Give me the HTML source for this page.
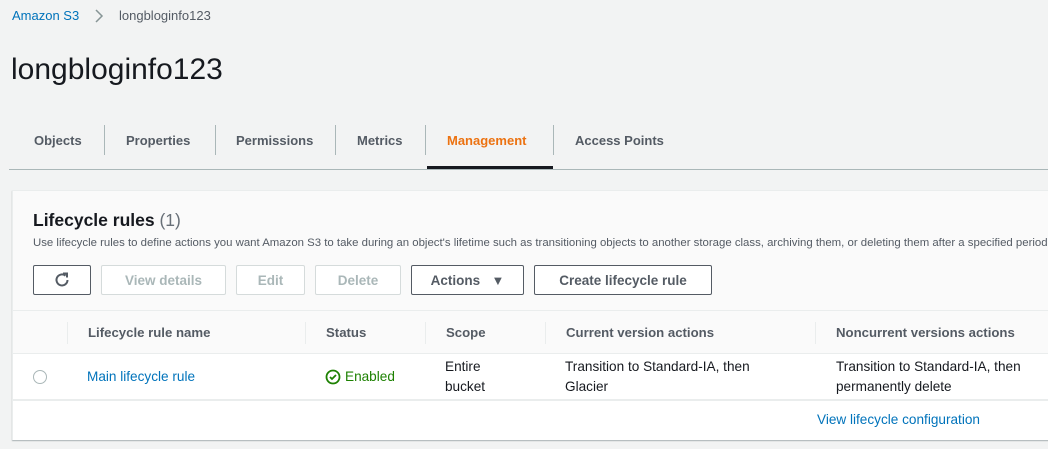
<!DOCTYPE html>
<html><head><style>
*{margin:0;padding:0;box-sizing:border-box}
body{width:1048px;height:449px;background:#f2f3f3;font-family:"Liberation Sans",sans-serif;color:#16191f;position:relative;overflow:hidden}
.a{position:absolute;white-space:nowrap}
.tab{position:absolute;top:133px;font-size:13px;font-weight:bold;color:#545b64}
.sep{position:absolute;top:125px;width:1px;height:30px;background:#aab7b8}
.btn{position:absolute;top:265px;height:30px;border:1px solid #545b64;border-radius:2px;font-size:13.5px;font-weight:bold;color:#545b64;display:flex;align-items:center;justify-content:center;background:#fff}
.dis{border-color:#d5dbdb;color:#aab7b8}
.th{position:absolute;top:325px;font-size:13.2px;font-weight:bold;color:#545b64}
.thsep{position:absolute;top:322px;width:1px;height:22px;background:#eaeded}
.td{position:absolute;font-size:13.6px;line-height:20px;color:#16191f}
</style></head><body>
<div class="a" style="left:12px;top:8px;font-size:13px;color:#0073bb">Amazon S3</div>
<svg class="a" style="left:94px;top:9px" width="10" height="14"><path d="M2 1l6 6-6 6" fill="none" stroke="#879596" stroke-width="1.5"/></svg>
<div class="a" style="left:119px;top:8px;font-size:13px;color:#545b64">longbloginfo123</div>
<div class="a" style="left:11px;top:53px;font-size:30px;color:#16191f">longbloginfo123</div>
<div class="tab" style="left:34px">Objects</div>
<div class="sep" style="left:104px"></div>
<div class="tab" style="left:126px">Properties</div>
<div class="sep" style="left:215px"></div>
<div class="tab" style="left:236px">Permissions</div>
<div class="sep" style="left:335px"></div>
<div class="tab" style="left:357px">Metrics</div>
<div class="sep" style="left:425px"></div>
<div class="tab" style="left:447px;color:#ec7211">Management</div>
<div class="sep" style="left:553px"></div>
<div class="tab" style="left:575px">Access Points</div>
<div class="a" style="left:427px;top:166px;width:126px;height:3px;background:#16191f"></div>
<div class="a" style="left:9px;top:169px;width:1039px;height:1px;background:#aab7b8"></div>
<div class="a" style="left:12px;top:190px;width:1040px;height:250px;background:#fafafa;border:1px solid #eaeded;box-shadow:0 1px 1px rgba(0,28,36,.3)"></div>
<div class="a" style="left:13px;top:353px;width:1035px;height:87px;background:#fff"></div>
<div class="a" style="left:13px;top:310px;width:1035px;height:1px;background:#eaeded"></div>
<div class="a" style="left:13px;top:353px;width:1035px;height:1px;background:#eaeded"></div>
<div class="a" style="left:13px;top:399px;width:1035px;height:2px;background:#eaeded"></div>
<div class="a" style="left:33px;top:210px;font-size:17.5px;font-weight:bold">Lifecycle rules <span style="font-weight:normal;color:#687078">(1)</span></div>
<div class="a" style="left:33px;top:237px;font-size:11.4px;color:#545b64">Use lifecycle rules to define actions you want Amazon S3 to take during an object's lifetime such as transitioning objects to another storage class, archiving them, or deleting them after a specified period of time.</div>
<div class="btn" style="left:33px;width:58px"><svg width="20" height="20" viewBox="0 0 20 20"><path d="M15.5 10a5.5 5.5 0 1 1-2-4.3" fill="none" stroke="#545b64" stroke-width="2"/><path d="M11 3.5h4v4" fill="none" stroke="#545b64" stroke-width="2"/></svg></div>
<div class="btn dis" style="left:101px;width:125px">View details</div>
<div class="btn dis" style="left:236px;width:69px">Edit</div>
<div class="btn dis" style="left:315px;width:86px">Delete</div>
<div class="btn" style="left:411px;width:113px">Actions&nbsp;&nbsp;&nbsp;<span style="font-size:13px">▼</span></div>
<div class="btn" style="left:534px;width:178px">Create lifecycle rule</div>
<div class="thsep" style="left:67px"></div>
<div class="th" style="left:88px">Lifecycle rule name</div>
<div class="thsep" style="left:305px"></div>
<div class="th" style="left:326px">Status</div>
<div class="thsep" style="left:425px"></div>
<div class="th" style="left:446px">Scope</div>
<div class="thsep" style="left:545px"></div>
<div class="th" style="left:566px">Current version actions</div>
<div class="thsep" style="left:815px"></div>
<div class="th" style="left:836px">Noncurrent versions actions</div>
<div class="a" style="left:33px;top:370px;width:14px;height:14px;border:1px solid #aab7b8;border-radius:50%;background:#fff"></div>
<div class="td" style="left:87px;top:367px;color:#0073bb">Main lifecycle rule</div>
<svg class="a" style="left:325px;top:369px" width="16" height="16" viewBox="0 0 16 16"><circle cx="8" cy="8" r="6.5" fill="none" stroke="#1d8102" stroke-width="1.8"/><path d="M5 8l2 2 4-4" fill="none" stroke="#1d8102" stroke-width="1.8"/></svg>
<div class="td" style="left:345px;top:367px;color:#1d8102">Enabled</div>
<div class="td" style="left:445px;top:357px">Entire<br>bucket</div>
<div class="td" style="left:565px;top:357px">Transition to Standard-IA, then<br>Glacier</div>
<div class="td" style="left:836px;top:357px">Transition to Standard-IA, then<br>permanently delete</div>
<div class="td" style="left:817px;top:410px;color:#0073bb">View lifecycle configuration</div>
</body></html>
